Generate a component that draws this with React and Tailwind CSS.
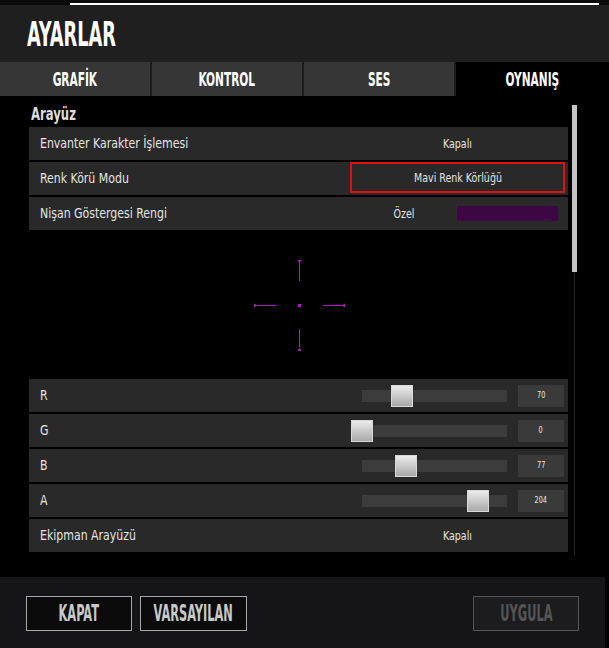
import React from "react";

const FONT = { fontFamily: '"DejaVu Sans Condensed", "DejaVu Sans", sans-serif' };

const SLIDERS = [
  { label: "R", value: 70 },
  { label: "G", value: 0 },
  { label: "B", value: 77 },
  { label: "A", value: 204 },
];

const TRACK_W = 145;

function Row({ label, children }) {
  return (
    <div className="flex h-[33px] items-center bg-[#292929] pr-[3px]">
      <span className="flex-1 pl-[11px] text-[14px] text-[#e4e4e4]">
        <span className="inline-block origin-left scale-x-[0.87]">{label}</span>
      </span>
      {children}
    </div>
  );
}

function Crosshair() {
  const c = "#a024b2";
  return (
    <svg width="100" height="100" viewBox="0 0 100 100">
      <g stroke={c} strokeWidth="1">
        <line x1="50.5" y1="8" x2="50.5" y2="26" />
        <line x1="50.5" y1="74" x2="50.5" y2="92" />
        <line x1="8" y1="50.5" x2="27" y2="50.5" />
        <line x1="74" y1="50.5" x2="93" y2="50.5" />
      </g>
      <g fill={c}>
        <polygon points="48.5,5 52.5,5 50.5,8.5" />
        <polygon points="48.5,96 52.5,96 50.5,92.5" />
        <polygon points="5,48.5 5,52.5 8.5,50.5" />
        <polygon points="96,48.5 96,52.5 92.5,50.5" />
        <rect x="49" y="49" width="3" height="3" />
      </g>
    </svg>
  );
}

function SliderRow({ label, value }) {
  const left = (value / 255) * TRACK_W - 11;
  return (
    <div className="flex h-[33px] items-center bg-[#292929] pr-[4px]">
      <span className="flex-1 pl-[11px] text-[14px] text-[#e4e4e4]">
        <span className="inline-block origin-left scale-x-[0.87]">{label}</span>
      </span>
      <div className="relative h-[12px] w-[145px] bg-[#3c3c3c]">
        <div
          className="absolute top-[-5px] h-[22px] w-[22px] border border-[#d8d8d8] bg-gradient-to-b from-[#ececec] to-[#a9a9a9]"
          style={{ left }}
        />
      </div>
      <div className="ml-[11px] flex h-[22px] w-[46px] items-center justify-center bg-[#3a3a3a] text-[9px] text-[#e8e8e8]">
        <span className="inline-block scale-x-[0.8]">{value}</span>
      </div>
    </div>
  );
}

export default function App() {
  return (
    <div className="flex h-[648px] w-[609px] flex-col overflow-hidden bg-black" style={FONT}>
      {/* top strip */}
      <div className="h-[5px] bg-[#0b0b0b] pt-[3px]">
        <div className="ml-[70px] mr-[10px] h-[2px] bg-white" />
      </div>

      {/* header */}
      <div className="flex h-[57px] items-center bg-[#1f1f1f] pl-[27px]">
        <span className="inline-block origin-left scale-x-[0.58] text-[34px] font-bold leading-none text-white">
          AYARLAR
        </span>
      </div>

      {/* tabs */}
      <div className="grid h-[34px] grid-cols-[150px_150px_150px_1fr] gap-x-[2px] bg-[#1c1c1c]">
        {["GRAFİK", "KONTROL", "SES"].map((t) => (
          <div key={t} className="flex items-center justify-center bg-[#363636] text-[19px] font-bold text-white">
            <span className="inline-block scale-x-[0.62]">{t}</span>
          </div>
        ))}
        <div className="flex items-center justify-center bg-black text-[19px] font-bold text-white">
          <span className="inline-block scale-x-[0.62]">OYNANIŞ</span>
        </div>
      </div>

      {/* content */}
      <div className="relative h-[481px] bg-black pl-[29px] pr-[41px] pt-[9px]">
        <div className="h-[22px] pl-[2px] text-[18px] font-bold leading-[18px] text-[#dedede]">
          <span className="inline-block origin-left scale-x-[0.72]">Arayüz</span>
        </div>

        <div className="flex flex-col gap-[2px]">
          <Row label="Envanter Karakter İşlemesi">
            <div className="flex h-full w-[215px] items-center justify-center text-[12px] text-[#e4e4e4]">
              <span className="inline-block scale-x-[0.88]">Kapalı</span>
            </div>
          </Row>
          <Row label="Renk Körü Modu">
            <div className="flex h-[31px] w-[215px] items-center justify-center self-start border-2 border-[#e01010] text-[12px] text-[#e4e4e4]">
              <span className="inline-block scale-x-[0.88]">Mavi Renk Körlüğü</span>
            </div>
          </Row>
          <Row label="Nişan Göstergesi Rengi">
            <div className="flex h-full w-[215px] items-center">
              <div className="w-[107px] text-center text-[12px] text-[#e4e4e4]">
                <span className="inline-block scale-x-[0.88]">Özel</span>
              </div>
              <div className="h-[15px] w-[101px] bg-[#3d0744]" />
            </div>
          </Row>

          <div className="flex h-[145px] items-center justify-center bg-black">
            <Crosshair />
          </div>

          {SLIDERS.map((s) => (
            <SliderRow key={s.label} label={s.label} value={s.value} />
          ))}

          <Row label="Ekipman Arayüzü">
            <div className="flex h-full w-[215px] items-center justify-center text-[12px] text-[#e4e4e4]">
              <span className="inline-block scale-x-[0.88]">Kapalı</span>
            </div>
          </Row>
        </div>

        {/* scrollbar */}
        <div className="absolute left-[574px] top-[176px] h-[283px] w-[1px] bg-[#262626]" />
        <div className="absolute left-[572px] top-[9px] h-[167px] w-[5px] bg-[#c4c4c4]" />
      </div>

      {/* bottom bar */}
      <div className="mr-[4px] flex h-[71px] items-start justify-between bg-[#151517] pl-[26px] pr-[26px] pt-[19px]">
        <div className="flex gap-[8px]">
          <button className="flex h-[35px] w-[106px] items-center justify-center border border-[#a8a8a8] bg-[#0b0b0b] text-[23px] font-bold text-[#c8c8c8]">
            <span className="inline-block scale-x-[0.55]">KAPAT</span>
          </button>
          <button className="flex h-[35px] w-[107px] items-center justify-center border border-[#a8a8a8] bg-[#0b0b0b] text-[23px] font-bold text-[#c8c8c8]">
            <span className="inline-block scale-x-[0.55]">VARSAYILAN</span>
          </button>
        </div>
        <button className="flex h-[35px] w-[106px] items-center justify-center border border-[#555] bg-[#1c1c1e] text-[23px] font-bold text-[#555]">
          <span className="inline-block scale-x-[0.55]">UYGULA</span>
        </button>
      </div>
    </div>
  );
}
